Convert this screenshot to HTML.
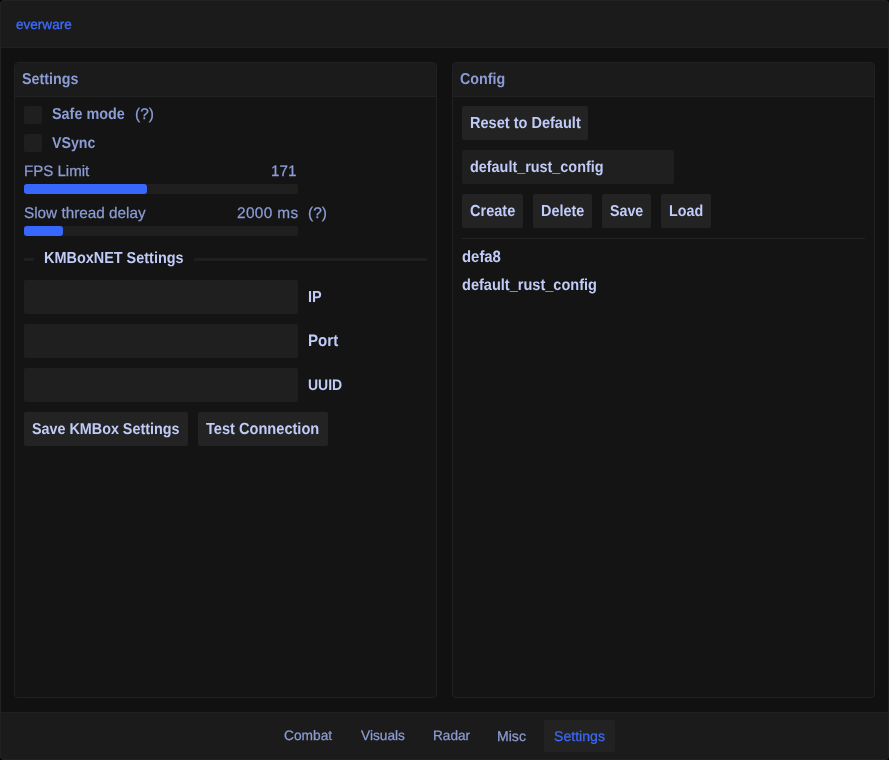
<!DOCTYPE html>
<html><head><meta charset="utf-8">
<style>
*{margin:0;padding:0;box-sizing:border-box}
html,body{width:889px;height:760px;background:#000;overflow:hidden}
body{-webkit-font-smoothing:antialiased;font-family:"Liberation Sans",sans-serif;position:relative}
.a{position:absolute}
span.a,.t{position:absolute;white-space:nowrap;line-height:20px;font-size:15.3px;will-change:transform;text-rendering:geometricPrecision}
.c1{color:#8c9cd4}
.c2{color:#c1cbf7}
.m{font-weight:bold}
.r{-webkit-text-stroke:0.25px currentColor}
.s{transform:scaleY(1.1);transform-origin:0 4px}
#win{left:0;top:0;width:889px;height:760px;background:#111111;border-radius:4px;overflow:hidden}
#edge{left:0;top:0;width:889px;height:760px;border:1px solid #222222;border-radius:4px}
.bar{background:#1b1b1b}
.panel{background:#141414;border:1px solid #212121;border-radius:4px;overflow:hidden}
.ph{left:0;top:0;width:100%;height:34px;background:#1b1b1b;border-bottom:1px solid #212121}
.frame{background:#1f1f1f;border-radius:2px}
.btn{background:#232323;border-radius:2px}
.fill{background:#3868fb;border-radius:3px}
.sep{background:#1f1f1f}
</style></head>
<body>
<div id="win" class="a">
  <!-- title bar -->
  <div class="a bar" style="left:0;top:0;width:889px;height:48px;border-bottom:1px solid #212121"></div>
  <span class="a" style="left:16px;top:15px;font-size:13.55px;color:#3d6af8;-webkit-text-stroke:0.35px #3d6af8">everware</span>

  <!-- Left panel -->
  <div class="a panel" style="left:14px;top:62px;width:423px;height:636px">
    <div class="a ph"></div>
  </div>
  <span class="a s c1 m" style="left:22px;top:69px;font-size:14.3px">Settings</span>

  <div class="a frame" style="left:24px;top:106px;width:18px;height:18px;border-radius:2px"></div>
  <span class="a s c1 m" style="left:52px;top:104px;font-size:14.4px">Safe mode</span>
  <span class="a c1 r" style="left:135px;top:105px;font-size:15.5px">(?)</span>
  <div class="a frame" style="left:24px;top:134px;width:18px;height:18px;border-radius:2px"></div>
  <span class="a s c1 m" style="left:52px;top:133px;font-size:14.2px">VSync</span>

  <span class="a c1 r" style="left:23.6px;top:162px;font-size:15.05px">FPS Limit</span>
  <span class="a c1 r" style="left:271px;top:162px;font-size:15.2px">171</span>
  <div class="a frame" style="left:24px;top:184px;width:274px;height:10px"></div>
  <div class="a fill" style="left:24px;top:184px;width:123px;height:10px"></div>

  <span class="a c1 r" style="left:23.6px;top:204px;font-size:15.3px">Slow thread delay</span>
  <span class="a c1 r" style="left:236.5px;top:204px;font-size:15.4px;letter-spacing:0.35px">2000 ms</span>
  <span class="a c1 r" style="left:308px;top:204px;font-size:15.5px">(?)</span>
  <div class="a frame" style="left:24px;top:226px;width:274px;height:10px"></div>
  <div class="a fill" style="left:24px;top:226px;width:39px;height:10px"></div>

  <div class="a sep" style="left:24px;top:258px;width:10px;height:3px"></div>
  <span class="a s c2 m" style="left:44px;top:248px;font-size:14.45px">KMBoxNET Settings</span>
  <div class="a sep" style="left:194px;top:258px;width:233px;height:3px"></div>

  <div class="a frame" style="left:24px;top:280px;width:274px;height:34px"></div>
  <span class="a s c2 m" style="font-size:14.5px;left:308px;top:287px">IP</span>
  <div class="a frame" style="left:24px;top:324px;width:274px;height:34px"></div>
  <span class="a s c2 m" style="left:308px;top:331px;font-size:15.1px">Port</span>
  <div class="a frame" style="left:24px;top:368px;width:274px;height:34px"></div>
  <span class="a s c2 m" style="font-size:14px;left:308px;top:374px">UUID</span>

  <div class="a btn" style="left:24px;top:412px;width:164px;height:34px"></div>
  <span class="a s c2 m" style="left:32px;top:419px;font-size:14.35px">Save KMBox Settings</span>
  <div class="a btn" style="left:198px;top:412px;width:130px;height:34px"></div>
  <span class="a s c2 m" style="left:206px;top:419px;font-size:14.6px">Test Connection</span>

  <!-- Right panel -->
  <div class="a panel" style="left:452px;top:62px;width:423px;height:636px">
    <div class="a ph"></div>
  </div>
  <span class="a s c1 m" style="left:460px;top:69px;font-size:14.3px">Config</span>

  <div class="a btn" style="left:462px;top:106px;width:126px;height:34px"></div>
  <span class="a s c2 m" style="left:470px;top:113px;font-size:14.55px">Reset to Default</span>
  <div class="a frame" style="left:462px;top:150px;width:212px;height:34px"></div>
  <span class="a s c2 m" style="left:470px;top:157px;font-size:14.4px">default_rust_config</span>
  <div class="a btn" style="left:462px;top:194px;width:61px;height:34px"></div>
  <span class="a s c2 m" style="left:470px;top:201px;font-size:14.55px">Create</span>
  <div class="a btn" style="left:533px;top:194px;width:59px;height:34px"></div>
  <span class="a s c2 m" style="left:541px;top:201px;font-size:14.45px">Delete</span>
  <div class="a btn" style="left:602px;top:194px;width:49px;height:34px"></div>
  <span class="a s c2 m" style="left:610px;top:201px;font-size:14.25px">Save</span>
  <div class="a btn" style="left:661px;top:194px;width:50px;height:34px"></div>
  <span class="a s c2 m" style="left:669px;top:201px;font-size:14.3px">Load</span>
  <div class="a" style="left:462px;top:238px;width:403px;height:1px;background:#232323"></div>
  <span class="a s c2 m" style="left:462px;top:247px;font-size:14.9px">defa8</span>
  <span class="a s c2 m" style="left:462px;top:275px;font-size:14.55px">default_rust_config</span>

  <!-- bottom bar -->
  <div class="a bar" style="left:0;top:712px;width:889px;height:48px;border-top:1px solid #212121"></div>
  <span class="a c1 r" style="left:284px;top:726px;font-size:13.75px">Combat</span>
  <span class="a c1 r" style="left:361px;top:726px;font-size:13.7px">Visuals</span>
  <span class="a c1 r" style="left:432.6px;top:726px;font-size:13.6px">Radar</span>
  <span class="a c1 r" style="left:497px;top:726px;font-size:14.1px">Misc</span>
  <div class="a btn" style="left:544px;top:720px;width:71px;height:32px;background:#222"></div>
  <span class="a r" style="left:554px;top:726px;font-size:14.1px;color:#3d69f6">Settings</span>

  <div class="a" style="left:884px;top:755px;width:0;height:0;border-left:5px solid transparent;border-bottom:5px solid #0e1b46"></div>
  <div id="edge" class="a"></div>
</div>
</body></html>
